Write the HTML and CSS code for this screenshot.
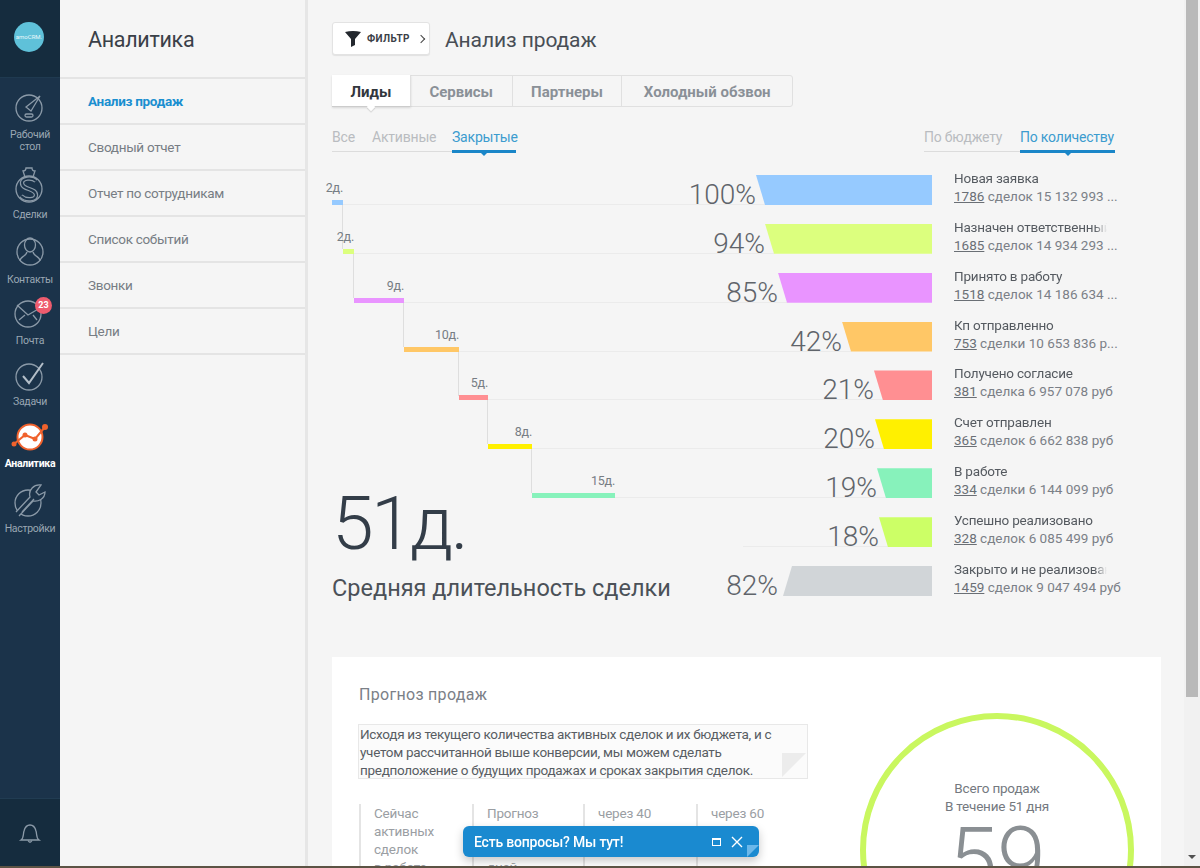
FILE: index.html
```html
<!DOCTYPE html>
<html lang="ru">
<head>
    <meta charset="UTF-8">
    <title>Аналитика</title>
    <link rel="stylesheet" href="styles.css">
</head>
<body>
    <div class="app">
        <aside class="sidebar">
            <div class="logo"><span class="logo-mark">amoCRM.</span></div>
            <nav class="apps">
                <a class="app-item">
                    <svg width="44" height="36" viewBox="0 1 44 36"><circle cx="21" cy="18" r="13"/><path d="M18 17L32 6 23 21Z"/><rect x="17" y="24" width="8" height="3" rx="1.5"/></svg>
                    <span>Рабочий<br>стол</span>
                </a>
                <a class="app-item">
                    <svg width="44" height="42" viewBox="0 1 44 42"><path d="M17 13L15 7Q18 7 18 4L24 4Q24 7 27 7L25 13"/><circle cx="21" cy="25" r="13"/><path class="s-wide" d="M28 17C24 13 14 14 14 19C14 26 28 24 28 31C28 36 18 37 13 32"/><path class="s-cut" d="M28 17C24 13 14 14 14 19C14 26 28 24 28 31C28 36 18 37 13 32"/></svg>
                    <span>Сделки</span>
                </a>
                <a class="app-item">
                    <svg width="44" height="39" viewBox="0 1 44 39"><circle cx="22" cy="20" r="13"/><ellipse cx="22" cy="13" rx="5.5" ry="7"/><path d="M12 29C12 24 18 25 19 20M32 29C32 24 26 25 25 20"/></svg>
                    <span>Контакты</span>
                </a>
                <a class="app-item">
                    <svg width="44" height="35" viewBox="0 1 44 35"><circle cx="20" cy="17" r="13"/><path d="M9 8L20 18 32 11M11 23L17 18M29 23L25 18"/></svg>
                    <b class="badge">23</b>
                    <span>Почта</span>
                </a>
                <a class="app-item">
                    <svg width="44" height="35" viewBox="0 1 44 35"><circle cx="21" cy="19" r="13"/><path class="s-check" d="M15 18L21 25 35 5"/></svg>
                    <span>Задачи</span>
                </a>
                <a class="app-item is-active">
                    <svg width="44" height="36" viewBox="0 1 44 36"><circle class="s-disc" cx="22" cy="18" r="12.5"/><path class="s-line" d="M6 25L17 16 27 20 37 8"/><circle class="s-dot" cx="6" cy="25" r="2.5"/><circle class="s-dot" cx="17" cy="16" r="2.5"/><circle class="s-dot" cx="27" cy="20" r="2.5"/><circle class="s-dot" cx="37" cy="8" r="3"/></svg>
                    <span>Аналитика</span>
                </a>
                <a class="app-item">
                    <svg width="44" height="39" viewBox="0 1 44 39"><circle cx="20" cy="22" r="13"/><path class="s-fill" d="M11 35L25 20C30 21 37 18 37 11L31 14 28 11 33 4C26 3 20 9 22 16L8 31"/><path d="M14 31L26 18"/></svg>
                    <span>Настройки</span>
                </a>
            </nav>
            <div class="bell">
                <svg width="24" height="24" viewBox="0 0 24 24"><path d="M3 19C6 17 5 13 6 10C7 6 9 4 12 4C15 4 17 6 18 10C19 13 18 17 21 19Z"/><path d="M10 19.5Q12 23 14 19.5"/></svg>
            </div>
        </aside>

        <section class="subnav">
            <h1 class="subnav-title">Аналитика</h1>
            <ul class="subnav-list">
                <li class="is-current">Анализ продаж</li>
                <li>Сводный отчет</li>
                <li>Отчет по сотрудникам</li>
                <li>Список событий</li>
                <li>Звонки</li>
                <li>Цели</li>
            </ul>
        </section>

        <main class="content">
            <header class="page-head">
                <button class="filter-btn">
                    <svg width="16" height="16" viewBox="0 0 16 16"><path d="M0 1Q8 -1 16 1L10 8V14L6 16V8Z"/></svg>
                    <span>ФИЛЬТР</span>
                    <i class="chev"></i>
                </button>
                <h2 class="page-title">Анализ продаж</h2>
            </header>

            <div class="tabs">
                <a class="tab is-active" style="width:79px">Лиды</a>
                <a class="tab" style="width:102px">Сервисы</a>
                <a class="tab" style="width:110px">Партнеры</a>
                <a class="tab" style="width:170px">Холодный обзвон</a>
            </div>

            <div class="switches">
                <div class="switch">
                    <a style="width:40px">Все</a>
                    <a style="width:80px">Активные</a>
                    <a class="is-on" style="width:64px">Закрытые</a>
                </div>
                <div class="switch">
                    <a style="width:96px">По бюджету</a>
                    <a class="is-on" style="width:95px">По количеству</a>
                </div>
            </div>

            <div class="funnel">
                <div class="row">
                    <div class="track"><i class="line" style="left:11px"></i><div class="stage" style="left:0;width:11px;background:#96caff"><em>2д.</em></div><span class="pct">100%</span></div>
                    <div class="trap" style="width:176px;background:#96caff"></div>
                    <div class="info"><p class="name">Новая заявка</p><p class="stat"><u>1786</u> сделок 15 132 993 ...</p></div>
                </div>
                <div class="row">
                    <div class="track"><i class="line" style="left:22px"></i><div class="stage" style="left:11px;width:11px;background:#dcff7e"><em>2д.</em></div><span class="pct">94%</span></div>
                    <div class="trap" style="width:167px;background:#dcff7e"></div>
                    <div class="info"><p class="name">Назначен ответственный</p><p class="stat"><u>1685</u> сделок 14 934 293 ...</p></div>
                </div>
                <div class="row">
                    <div class="track"><i class="line" style="left:72px"></i><div class="stage" style="left:22px;width:50px;background:#e994ff"><em>9д.</em></div><span class="pct">85%</span></div>
                    <div class="trap" style="width:154px;background:#e994ff"></div>
                    <div class="info"><p class="name">Принято в работу</p><p class="stat"><u>1518</u> сделок 14 186 634 ...</p></div>
                </div>
                <div class="row">
                    <div class="track"><i class="line" style="left:127px"></i><div class="stage" style="left:72px;width:55px;background:#ffc766"><em>10д.</em></div><span class="pct">42%</span></div>
                    <div class="trap" style="width:90px;background:#ffc766"></div>
                    <div class="info"><p class="name">Кп отправленно</p><p class="stat"><u>753</u> сделки 10 653 836 р...</p></div>
                </div>
                <div class="row">
                    <div class="track"><i class="line" style="left:156px"></i><div class="stage" style="left:127px;width:29px;background:#ff8f92"><em>5д.</em></div><span class="pct">21%</span></div>
                    <div class="trap" style="width:58px;background:#ff8f92"></div>
                    <div class="info"><p class="name">Получено согласие</p><p class="stat"><u>381</u> сделка 6 957 078 руб</p></div>
                </div>
                <div class="row">
                    <div class="track"><i class="line" style="left:200px"></i><div class="stage" style="left:156px;width:44px;background:#fff000"><em>8д.</em></div><span class="pct">20%</span></div>
                    <div class="trap" style="width:57px;background:#fff000"></div>
                    <div class="info"><p class="name">Счет отправлен</p><p class="stat"><u>365</u> сделок 6 662 838 руб</p></div>
                </div>
                <div class="row">
                    <div class="track"><i class="line" style="left:283px"></i><div class="stage is-last" style="left:200px;width:83px;background:#87f2bb"><em>15д.</em></div><span class="pct">19%</span></div>
                    <div class="trap" style="width:55px;background:#87f2bb"></div>
                    <div class="info"><p class="name">В работе</p><p class="stat"><u>334</u> сделки 6 144 099 руб</p></div>
                </div>
                <div class="row">
                    <div class="track"><i class="line" style="left:411px"></i><span class="pct">18%</span></div>
                    <div class="trap" style="width:53px;background:#ccff66"></div>
                    <div class="info"><p class="name">Успешно реализовано</p><p class="stat"><u>328</u> сделок 6 085 499 руб</p></div>
                </div>
                <div class="row">
                    <div class="track"><span class="pct pct-lost">82%</span></div>
                    <div class="trap trap-lost" style="width:149px;background:#d1d5d8"></div>
                    <div class="info"><p class="name">Закрыто и не реализовано</p><p class="stat"><u>1459</u> сделок 9 047 494 руб</p></div>
                </div>
            </div>

            <div class="summary">
                <div class="summary-num">51д.</div>
                <div class="summary-text">Средняя длительность сделки</div>
            </div>

            <section class="forecast">
                <div class="forecast-left">
                    <h3 class="forecast-title">Прогноз продаж</h3>
                    <p class="note">Исходя из текущего количества активных сделок и их бюджета, и с учетом рассчитанной выше конверсии, мы можем сделать предположение о будущих продажах и сроках закрытия сделок.</p>
                    <div class="forecast-cols">
                        <div class="col" style="width:113px">Сейчас<br>активных<br>сделок<br>в работе</div>
                        <div class="col" style="width:111px">Прогноз<br>продаж<br>через 20<br>дней</div>
                        <div class="col" style="width:113px">через 40<br>дней</div>
                        <div class="col" style="width:100px">через 60<br>дней</div>
                    </div>
                </div>
                <div class="ring">
                    <p>Всего продаж<br>В течение 51 дня</p>
                    <div class="ring-num">59</div>
                </div>
            </section>
        </main>

        <div class="scrollbar"><div class="scroll-thumb"></div><i class="scroll-arrow"></i></div>
    </div>

    <div class="chat">
        <span>Есть вопросы? Мы тут!</span>
        <i class="chat-max"></i>
        <svg width="12" height="12" viewBox="0 0 12 12"><path d="M1 1L11 11M11 1L1 11"/></svg>
        <i class="chat-fold"></i>
    </div>
    <div class="taskbar"></div>
</body>
</html>
```

FILE: styles.css
```css
* {
    box-sizing: border-box;
}
body {
    margin: 0;
    height: 868px;
    overflow: hidden;
    font-family: Roboto, "Noto Sans", sans-serif;
    font-size: 13.5px;
    letter-spacing: -0.2px;
    background: #f5f5f5;
    color: #555a60;
}
p, h1, h2, h3, ul {
    margin: 0;
    padding: 0;
    font-weight: 400;
}
.app {
    display: flex;
    height: 868px;
}

/* left icon bar */
.sidebar {
    width: 60px;
    flex: none;
    display: flex;
    flex-direction: column;
    background: #1b334a;
}
.logo {
    height: 78px;
    flex: none;
    display: flex;
    align-items: center;
    justify-content: center;
    background: #152c3e;
    border-bottom: 1px solid #1f3a50;
}
.logo-mark {
    width: 30px;
    height: 30px;
    margin-top: -4px;
    margin-right: 2px;
    border-radius: 50%;
    background: #5fc1d9;
    color: #eaf8fb;
    font-size: 6px;
    letter-spacing: 0;
    line-height: 30px;
    text-align: center;
    white-space: nowrap;
    overflow: hidden;
}
.apps {
    flex: 1;
    padding-top: 13px;
    display: flex;
    flex-direction: column;
    gap: 12px;
}
.app-item {
    position: relative;
    display: flex;
    flex-direction: column;
    align-items: center;
    color: #9aa7b3;
    font-size: 10.5px;
    letter-spacing: -0.3px;
    line-height: 12px;
    text-align: center;
}
.app-item span {
    margin-top: 2px;
}
.app-item svg {
    fill: none;
    stroke: #8b9aa8;
    stroke-width: 1.3;
    display: block;
}
.app-item.is-active {
    color: #fff;
    font-weight: 700;
}
.app-item .s-wide {
    stroke-width: 4.4;
}
.app-item .s-cut {
    stroke: #1b334a;
    stroke-width: 2;
}
.app-item .s-check {
    stroke: #b3bec8;
    stroke-width: 2;
}
.app-item .s-fill {
    fill: #1b334a;
}
.app-item .s-disc {
    fill: #fff;
    stroke: #f0622d;
    stroke-width: 2;
}
.app-item .s-line {
    stroke: #f0622d;
    stroke-width: 2;
}
.app-item .s-dot {
    fill: #f0622d;
    stroke: none;
}
.badge {
    position: absolute;
    top: -1px;
    left: 35px;
    width: 17px;
    height: 17px;
    border-radius: 50%;
    background: #ee5c6e;
    color: #fff;
    font-size: 9px;
    letter-spacing: 0;
    line-height: 17px;
}
.bell {
    height: 68px;
    margin-bottom: 2px;
    flex: none;
    display: flex;
    align-items: center;
    justify-content: center;
    background: #152c3e;
    border-top: 1px solid #213c52;
}
.bell svg {
    fill: none;
    stroke: #8b9aa8;
    stroke-width: 1.3;
}

/* second column */
.subnav {
    width: 248px;
    flex: none;
    background: #f5f5f5;
    border-right: 3px solid #e6e6e6;
}
.subnav-title {
    height: 77px;
    padding: 26px 0 0 28px;
    font-size: 21.5px;
    letter-spacing: -0.3px;
    line-height: 28px;
    color: #3a4048;
}
.subnav-list {
    list-style: none;
}
.subnav-list li {
    height: 46px;
    padding-left: 28px;
    border-top: 2px solid #e4e4e4;
    letter-spacing: -0.3px;
    line-height: 45px;
    color: #777d84;
}
.subnav-list li:last-child {
    border-bottom: 2px solid #e4e4e4;
    height: 48px;
}
.subnav-list .is-current {
    color: #1a8fd0;
    font-weight: 700;
}

/* main */
.content {
    width: 876px;
    flex: none;
    padding: 22px 23px 0 24px;
    overflow: hidden;
}
.page-head {
    display: flex;
    align-items: center;
    gap: 15px;
    height: 33px;
}
.filter-btn {
    width: 98px;
    height: 33px;
    display: flex;
    align-items: center;
    padding: 0 0 0 12px;
    background: #fff;
    border: 1px solid #e3e3e3;
    border-radius: 3px;
    box-shadow: 0 1px 1px rgba(0, 0, 0, 0.08);
    font-family: inherit;
    font-size: 10px;
    font-weight: 700;
    color: #3b4047;
    letter-spacing: 0.4px;
}
.filter-btn svg {
    fill: #23282e;
    margin-right: 6px;
}
.chev {
    width: 6px;
    height: 6px;
    margin-left: 8px;
    border-top: 1px solid #444;
    border-right: 1px solid #444;
    transform: rotate(45deg);
}
.page-title {
    padding-top: 2px;
    font-size: 21px;
    letter-spacing: -0.1px;
    color: #484e55;
}
.tabs {
    display: flex;
    width: 461px;
    height: 32px;
    margin-top: 20px;
    border: 1px solid #e0e0e0;
    border-radius: 3px;
}
.tab {
    display: block;
    margin: -1px 0;
    border-right: 1px solid #e0e0e0;
    text-align: center;
    font-size: 15px;
    font-weight: 700;
    letter-spacing: 0;
    line-height: 34px;
    color: #8a9097;
}
.tab:last-child {
    border-right: 0;
}
.tab.is-active {
    position: relative;
    margin-left: -1px;
    background: #fff;
    color: #32373d;
    border-bottom: 1px solid #ccc;
    box-shadow: 0 1px 2px rgba(0, 0, 0, 0.12);
}
.tab.is-active::after {
    content: "";
    position: absolute;
    left: 36px;
    bottom: -4px;
    width: 6px;
    height: 6px;
    background: #fff;
    transform: rotate(45deg);
    box-shadow: 1px 1px 1px rgba(0, 0, 0, 0.12);
}
.switches {
    display: flex;
    justify-content: space-between;
    width: 783px;
    margin-top: 20px;
}
.switch {
    display: flex;
}
.switch a {
    position: relative;
    display: block;
    height: 25px;
    border-bottom: 1px solid #dcdcdc;
    color: #b9bcc0;
    font-size: 14px;
    line-height: 20px;
    white-space: nowrap;
}
.switch a.is-on {
    color: #3c9ccf;
    border-bottom: 3px solid #1a86c8;
    height: 26px;
}
.switch a.is-on::after {
    content: "";
    position: absolute;
    left: 50%;
    bottom: -6px;
    margin-left: -3px;
    border: 3px solid transparent;
    border-top-color: #1a86c8;
    border-bottom: 0;
}

/* funnel: stages step down to the right, bars stay on the right */
.funnel {
    width: 800px;
    margin-top: 3px;
}
.row {
    display: flex;
    align-items: flex-end;
    height: 48.9px;
}
.track {
    position: relative;
    flex: 1;
    height: 100%;
    display: flex;
    align-items: flex-end;
    justify-content: flex-end;
}
.line {
    position: absolute;
    right: -9px;
    bottom: 0;
    height: 1px;
    background: #ebebeb;
}
.stage {
    position: absolute;
    bottom: 0;
    height: 5px;
}
.stage::after {
    content: "";
    position: absolute;
    right: 0;
    top: 5px;
    width: 1px;
    height: 44px;
    background: #dedede;
}
.stage.is-last::after {
    display: none;
}
.stage em {
    position: absolute;
    right: 0;
    bottom: 10px;
    font-style: normal;
    font-size: 12.5px;
    line-height: 14px;
    white-space: nowrap;
    color: #777d84;
}
.pct {
    position: relative;
    font-size: 28px;
    font-weight: 300;
    letter-spacing: 0;
    line-height: 30px;
    color: #5f646a;
    margin-bottom: -5px;
}
.pct-lost {
    margin-right: 5px;
}
.trap {
    flex: none;
    height: 30px;
    clip-path: polygon(0 0, 100% 0, 100% 100%, 9px 100%);
}
.trap-lost {
    clip-path: polygon(9px 0, 100% 0, 100% 100%, 0 100%);
}
.info {
    flex: none;
    width: 178px;
    margin-left: 22px;
    line-height: 18px;
    white-space: nowrap;
}
.name {
    width: 153px;
    overflow: hidden;
    -webkit-mask-image: linear-gradient(to right, #000 92%, transparent);
    mask-image: linear-gradient(to right, #000 92%, transparent);
}
.stat {
    letter-spacing: 0;
    color: #7b8087;
}
.stat u {
    color: #6a6f75;
}
.summary {
    margin-top: -111px;
    height: 116px;
}
.summary-num {
    font-size: 75px;
    font-weight: 300;
    letter-spacing: -2.5px;
    line-height: 76px;
    color: #333d48;
}
.summary-text {
    margin-top: 12px;
    font-size: 23.5px;
    letter-spacing: 0;
    line-height: 30px;
    color: #4b5158;
}

/* forecast card, runs past the bottom of the window */
.forecast {
    display: flex;
    justify-content: space-between;
    width: 829px;
    height: 400px;
    margin-top: 56px;
    padding: 28px 27px 0;
    background: #fff;
}
.forecast-left {
    width: 449px;
}
.forecast-title {
    font-size: 16px;
    letter-spacing: 0.3px;
    line-height: 20px;
    color: #7b8087;
}
.note {
    position: relative;
    height: 55px;
    margin-top: 19px;
    margin-left: -1px;
    padding: 0 0 0 1px;
    background: #fbfbfb;
    border: 1px solid #e8e8e8;
    letter-spacing: -0.3px;
    line-height: 18px;
    color: #585d63;
}
.note::after {
    content: "";
    position: absolute;
    right: 1px;
    bottom: 1px;
    width: 24px;
    height: 24px;
    background: #ececec;
    clip-path: polygon(0 100%, 0 0, 100% 0);
}
.forecast-cols {
    display: flex;
    margin-top: 25px;
}
.col {
    height: 80px;
    padding: 0 0 0 13px;
    border-left: 2px solid #e4e4e4;
    line-height: 18px;
    color: #9a9ea3;
}
.ring {
    width: 274px;
    height: 274px;
    flex: none;
    margin: 28px 0 0;
    padding-top: 60px;
    border: 6px solid #c9f75f;
    border-radius: 50%;
    text-align: center;
    line-height: 18px;
    color: #74797f;
}
.ring-num {
    margin-top: 0;
    font-size: 88px;
    font-weight: 300;
    letter-spacing: 0;
    line-height: 88px;
    color: #8a8f93;
}
.scrollbar {
    position: relative;
    width: 16px;
    flex: none;
    background: #f1f1f1;
}
.scroll-thumb {
    width: 12px;
    height: 697px;
    margin-left: 2px;
    background: #b9b9b9;
}
.scroll-arrow {
    position: absolute;
    left: 4px;
    top: 855px;
    border: 4px solid transparent;
    border-top-color: #505050;
    border-bottom: 0;
}

/* chat widget */
.chat {
    position: fixed;
    left: 463px;
    top: 826px;
    width: 296px;
    height: 31px;
    display: flex;
    align-items: center;
    padding-left: 11px;
    background: #1a8ad0;
    border-radius: 6px;
    box-shadow: 0 4px 10px rgba(0, 0, 0, 0.22);
    color: #fff;
    font-size: 14px;
    font-weight: 500;
}
.chat span {
    flex: 1;
}
.chat-max {
    width: 9px;
    height: 8px;
    margin-right: 10px;
    border: 1px solid #fff;
    border-top-width: 2px;
}
.chat svg {
    margin-right: 16px;
    fill: none;
    stroke: #fff;
    stroke-width: 1.4;
}
.chat-fold {
    position: absolute;
    right: 0;
    bottom: 0;
    width: 12px;
    height: 12px;
    background: #6cb8ea;
    clip-path: polygon(100% 0, 0 0, 0 100%);
}
.taskbar {
    position: fixed;
    left: 0;
    right: 0;
    bottom: 0;
    height: 2px;
    background: #5c5344;
}
```
